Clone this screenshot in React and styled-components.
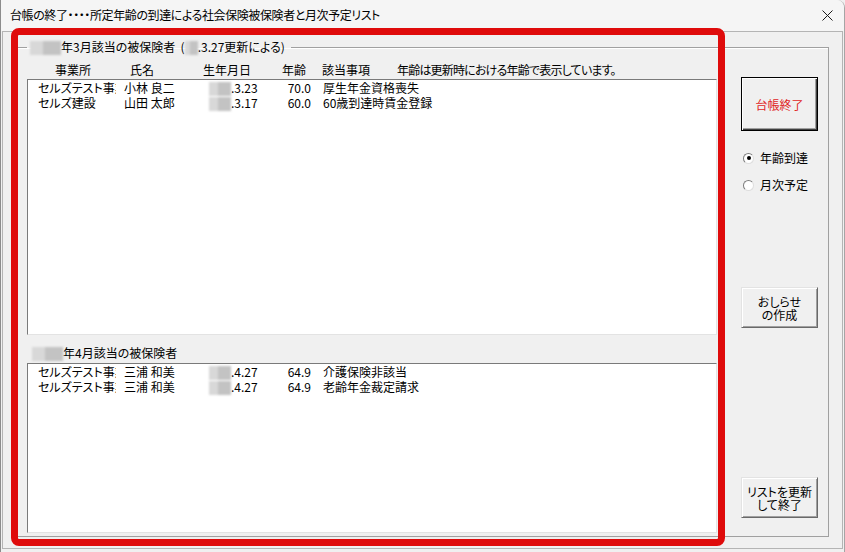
import React from "react";
import styled, { createGlobalStyle } from "styled-components";

const GlobalStyle = createGlobalStyle`
  html, body {
    margin: 0;
    padding: 0;
    background: #f0f0f0;
  }
  body {
    font-family: "Noto Sans CJK JP", "Noto Sans", sans-serif;
    font-size: 12px;
    color: #000;
    font-feature-settings: "palt";
  }
  * { box-sizing: border-box; }
`;

const marchRows = [
  { office: "セルズテスト事業所", name: "小林 良二", date: ".3.23", age: "70.0", item: "厚生年金資格喪失" },
  { office: "セルズ建設", name: "山田 太郎", date: ".3.17", age: "60.0", item: "60歳到達時賃金登録" },
];

const aprilRows = [
  { office: "セルズテスト事業所", name: "三浦 和美", date: ".4.27", age: "64.9", item: "介護保険非該当" },
  { office: "セルズテスト事業所", name: "三浦 和美", date: ".4.27", age: "64.9", item: "老齢年金裁定請求" },
];

export default function App() {
  return (
    <>
      <GlobalStyle />
      <Window>
        <TitleBar>
          <Title>台帳の終了・・・・所定年齢の到達による社会保険被保険者と月次予定リスト</Title>
          <CloseButton aria-label="close">
            <svg width="11" height="11" viewBox="0 0 11 11">
              <path d="M0.5 0.5 L10.5 10.5 M10.5 0.5 L0.5 10.5" stroke="#1b1b1b" strokeWidth="1" fill="none" />
            </svg>
          </CloseButton>
        </TitleBar>

        <Client>
          <Group>
            <Legend>
              <Redact $w={31} />年3月該当の被保険者 &nbsp;(<Redact $w={13} />.3.27更新による)
            </Legend>
            <GroupBody>
              <LeftPane>
                <HeaderRow>
                  <span>事業所</span>
                  <span>氏名</span>
                  <span>生年月日</span>
                  <span>年齢</span>
                  <span>該当事項</span>
                  <Note>年齢は更新時における年齢で表示しています。</Note>
                </HeaderRow>
                <ListBox $height={256}>
                  {marchRows.map((r, i) => (
                    <ListRow key={i}>
                      <Office>{r.office}</Office>
                      <span>{r.name}</span>
                      <span>
                        <Redact $w={22} />
                        {r.date}
                      </span>
                      <Age>{r.age}</Age>
                      <Item>{r.item}</Item>
                    </ListRow>
                  ))}
                </ListBox>
                <SubLabel>
                  <Redact $w={31} />年4月該当の被保険者
                </SubLabel>
                <ListBox $grow>
                  {aprilRows.map((r, i) => (
                    <ListRow key={i}>
                      <Office>{r.office}</Office>
                      <span>{r.name}</span>
                      <span>
                        <Redact $w={22} />
                        {r.date}
                      </span>
                      <Age>{r.age}</Age>
                      <Item>{r.item}</Item>
                    </ListRow>
                  ))}
                </ListBox>
              </LeftPane>

              <SidePane>
                <DefaultButton>台帳終了</DefaultButton>
                <RadioGroup>
                  <RadioLabel>
                    <RadioDot $checked />
                    年齢到達
                  </RadioLabel>
                  <RadioLabel>
                    <RadioDot />
                    月次予定
                  </RadioLabel>
                </RadioGroup>
                <PushButton $mt={95}>
                  おしらせ
                  <br />
                  の作成
                </PushButton>
                <PushButton $bottom>
                  リストを更新
                  <br />
                  して終了
                </PushButton>
              </SidePane>
            </GroupBody>
          </Group>
        </Client>

        <Highlight />
      </Window>
    </>
  );
}

const Window = styled.div`
  position: relative;
  width: 845px;
  height: 552px;
  display: flex;
  flex-direction: column;
  background: #f0f0f0;
  border-left: 1px solid #8c8c8c;
  border-right: 1px solid #a5a5a5;
  border-top-right-radius: 8px;
  overflow: hidden;
`;

const TitleBar = styled.div`
  height: 31px;
  flex: none;
  display: flex;
  align-items: center;
  justify-content: space-between;
  padding: 0 10px 1px 9px;
  background: #f5f5f5;
`;

const Title = styled.div`
  font-size: 12px;
  line-height: 16px;
  letter-spacing: -0.4px;
  white-space: nowrap;
`;

const CloseButton = styled.div`
  width: 11px;
  height: 11px;
  margin-right: 1px;
  display: flex;
`;

const Client = styled.div`
  flex: 1;
  display: flex;
  flex-direction: column;
  margin: 0 1px 3px 1px;
  padding: 7px 13px 11px 11px;
  border: 1px solid #b4b4b4;
  background: #f0f0f0;
`;

const Group = styled.fieldset`
  flex: 1;
  display: flex;
  flex-direction: column;
  min-width: 0;
  margin: 0;
  padding: 8px 10px 3px 12px;
  border: 1px solid #a0a0a0;
  box-shadow: inset 1px 1px #fff;
`;

const Legend = styled.legend`
  padding: 0 6px 0 3px;
  font-size: 12px;
  line-height: 16px;
  white-space: nowrap;
`;

const Redact = styled.span`
  display: inline-block;
  width: ${(p) => p.$w}px;
  height: 14px;
  vertical-align: -3px;
  background: linear-gradient(90deg, #d8d8d8 0 42%, #c3c3c3 42% 100%);
  filter: blur(0.8px);
`;

const GroupBody = styled.div`
  flex: 1;
  display: flex;
  gap: 24px;
`;

const LeftPane = styled.div`
  width: 690px;
  display: flex;
  flex-direction: column;
`;

const HeaderRow = styled.div`
  display: grid;
  grid-template-columns: 75px 73px 79px 40px 75px 1fr;
  padding-left: 28px;
  height: 14px;
  line-height: 14px;
  white-space: nowrap;
`;

const Note = styled.span`
  letter-spacing: -0.8px;
`;

const ListBox = styled.div`
  margin-top: ${(p) => (p.$grow ? 3 : 2)}px;
  ${(p) => (p.$grow ? "flex: 1;" : `height: ${p.$height}px;`)}
  padding: 0 0 0 10px;
  background: #fff;
  border: 1px solid;
  border-color: #7a7a7a #e3e3e3 #e3e3e3 #7a7a7a;
  overflow: hidden;
`;

const ListRow = styled.div`
  display: grid;
  grid-template-columns: 86px 85px 62px 40px 1fr;
  height: 15px;
  line-height: 15px;
  white-space: nowrap;
`;

const Office = styled.span`
  width: 78px;
  overflow: hidden;
`;

const Age = styled.span`
  text-align: right;
`;

const Item = styled.span`
  padding-left: 12px;
`;

const SubLabel = styled.div`
  margin-top: 11px;
  padding-left: 5px;
  height: 14px;
  line-height: 14px;
  white-space: nowrap;
`;

const SidePane = styled.div`
  width: 77px;
  display: flex;
  flex-direction: column;
`;

const DefaultButton = styled.div`
  margin-top: 14px;
  height: 54px;
  display: flex;
  align-items: center;
  justify-content: center;
  color: #e02525;
  border: 1px solid #000;
  box-shadow: inset 1px 1px #fff, inset -1px -1px #404040, inset -2px -2px #a0a0a0;
  background: #f0f0f0;
`;

const RadioGroup = styled.div`
  margin-top: 20px;
  padding-left: 2px;
  display: flex;
  flex-direction: column;
  gap: 13px;
`;

const RadioLabel = styled.div`
  display: flex;
  align-items: center;
  gap: 6px;
  height: 14px;
  line-height: 14px;
`;

const RadioDot = styled.span`
  width: 11px;
  height: 11px;
  border-radius: 50%;
  background: #fff;
  border: 1px solid;
  border-color: #7d7d7d #dedede #dedede #7d7d7d;
  display: flex;
  align-items: center;
  justify-content: center;
  &::after {
    content: "";
    width: 4px;
    height: 4px;
    border-radius: 50%;
    background: ${(p) => (p.$checked ? "#000" : "transparent")};
  }
`;

const PushButton = styled.div`
  margin-top: ${(p) => (p.$bottom ? "auto" : `${p.$mt}px`)};
  margin-bottom: ${(p) => (p.$bottom ? "15px" : "0")};
  height: 41px;
  display: flex;
  align-items: center;
  justify-content: center;
  text-align: center;
  line-height: 13px;
  background: #f0f0f0;
  border: 1px solid;
  border-color: #e3e3e3 #696969 #696969 #e3e3e3;
  box-shadow: inset 1px 1px #fff, inset -1px -1px #a0a0a0;
`;

const Highlight = styled.div`
  position: absolute;
  left: 10px;
  top: 28px;
  width: 714px;
  height: 518px;
  border: 7px solid #df0b0b;
  border-radius: 8px;
  pointer-events: none;
`;
